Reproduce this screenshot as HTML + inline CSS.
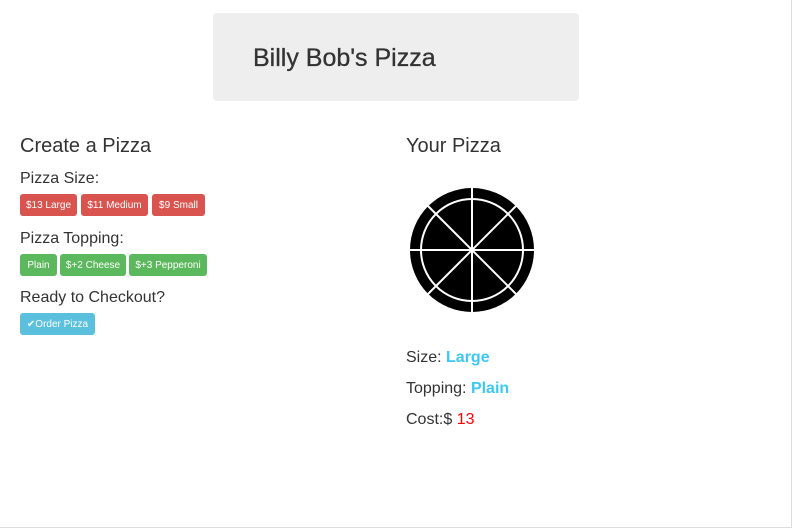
<!DOCTYPE html>
<html><head><style>
body{margin:0;width:793px;height:530px;position:relative;font-family:"Liberation Sans",sans-serif;color:#333;background:#fff;overflow:hidden}
.a{position:absolute;white-space:nowrap}
.frame{position:absolute;left:0;top:0;width:791px;height:527px;border-right:1px solid #ddd;border-bottom:1px solid #ddd}
.jumbo{position:absolute;left:213px;top:13px;width:366px;height:88px;background:#eee;border-radius:4px}
.h3{font-size:20px}
.h4{font-size:16px}
.btn{position:absolute;height:22px;line-height:24px;font-size:10px;color:#fff;border-radius:3px;text-align:center}
.r{background:#d9534f}.g{background:#5cb85c}.b{background:#5bc0de}
.p{font-size:16px}
</style></head><body>
<div class="frame"></div>
<div class="jumbo"></div>
<div class="a" style="left:253px;top:44px;font-size:25px;-webkit-text-stroke:0.3px #333">Billy Bob's Pizza</div>
<div class="a h3" style="left:20px;top:135px">Create a Pizza</div>
<div class="a h4" style="left:20px;top:170px">Pizza Size:</div>
<div class="btn r" style="left:20px;top:194px;width:57px">$13 Large</div>
<div class="btn r" style="left:81px;top:194px;width:67px">$11 Medium</div>
<div class="btn r" style="left:152px;top:194px;width:53px">$9 Small</div>
<div class="a h4" style="left:20px;top:230px">Pizza Topping:</div>
<div class="btn g" style="left:20px;top:254px;width:37px">Plain</div>
<div class="btn g" style="left:60px;top:254px;width:66px">$+2 Cheese</div>
<div class="btn g" style="left:129px;top:254px;width:78px">$+3 Pepperoni</div>
<div class="a h4" style="left:20px;top:289px">Ready to Checkout?</div>
<div class="btn b" style="left:20px;top:313px;width:75px">✔Order Pizza</div>
<div class="a h3" style="left:406px;top:135px">Your Pizza</div>
<svg class="a" style="left:410px;top:188px" width="124" height="124" viewBox="0 0 124 124">
<circle cx="62" cy="62" r="62" fill="#000"/>
<circle cx="62" cy="62" r="51" fill="none" stroke="#fff" stroke-width="2"/>
<g stroke="#fff" stroke-width="2">
<line x1="62" y1="0" x2="62" y2="124"/><line x1="0" y1="62" x2="124" y2="62"/>
<line x1="18" y1="18" x2="106" y2="106"/><line x1="106" y1="18" x2="18" y2="106"/>
</g></svg>
<div class="a p" style="left:406px;top:349px">Size: <b style="color:#3cc8f5">Large</b></div>
<div class="a p" style="left:406px;top:380px">Topping: <b style="color:#3cc8f5">Plain</b></div>
<div class="a p" style="left:406px;top:411px">Cost:$ <span style="color:red">13</span></div>
</body></html>
